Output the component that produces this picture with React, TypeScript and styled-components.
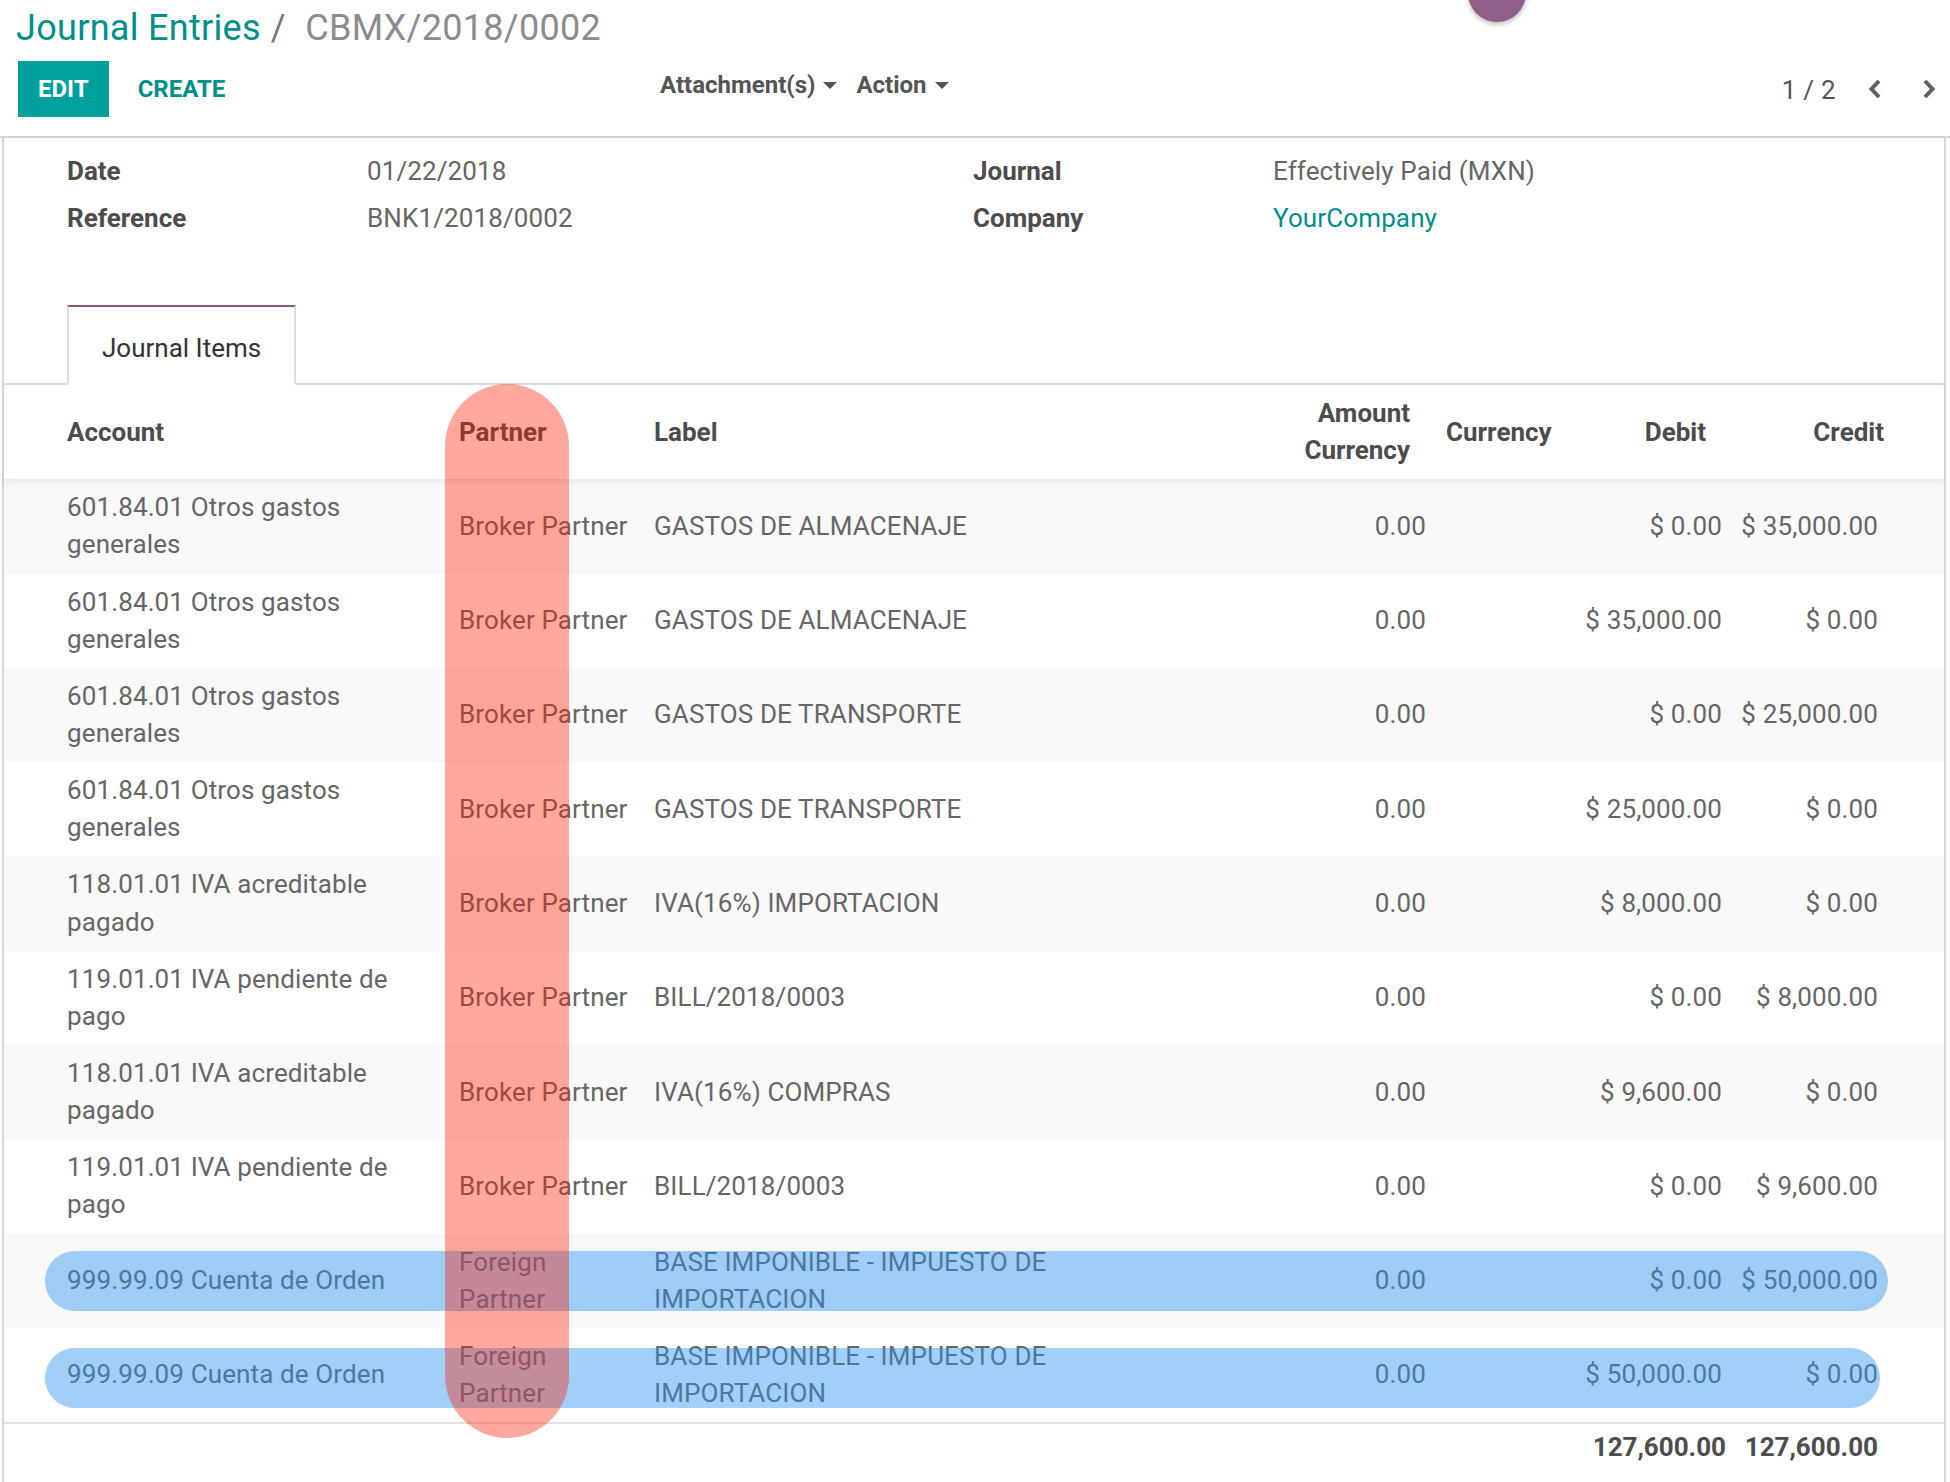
import React from 'react'
import styled, { createGlobalStyle } from 'styled-components'

const GlobalStyle = createGlobalStyle`
  html, body { margin: 0; padding: 0; background: #fff; }
  body {
    font-family: Roboto, 'Noto Sans', sans-serif;
    font-size: 26px;
    line-height: 1.42857;
    color: #666;
  }
  * { box-sizing: border-box; }
`

const TEAL = '#00A09D'
const LINK = '#00908c'

const Page = styled.div`
  position: relative;
  width: 1950px;
  height: 1482px;
  overflow: hidden;
`

const Bubble = styled.div`
  position: absolute;
  left: 1468px;
  top: -36px;
  width: 58px;
  height: 58px;
  border-radius: 50%;
  background: #8f5f87;
  box-shadow: 0 2px 5px rgba(0, 0, 0, 0.3);
  z-index: 5;
`

const ControlPanel = styled.div`
  padding: 8px 14px 19px 17px;
  border-bottom: 2px solid #d6d6d6;
`

const Breadcrumb = styled.div`
  display: flex;
  align-items: center;
  height: 40px;
  margin: 0 0 13px -1px;
  font-size: 36px;
  line-height: 40px;
  letter-spacing: 0.3px;
  white-space: nowrap;
`

const Crumb = styled.span`
  color: ${LINK};
`

const Separator = styled.span`
  color: #777;
  padding: 0 10px;
`

const Active = styled.span`
  color: #8c8c8c;
`

const ButtonRow = styled.div`
  display: grid;
  grid-template-columns: 643px 1fr auto;
  align-items: center;
  height: 56px;
`

const Buttons = styled.div`
  display: flex;
  gap: 9px;
  margin-left: 1px;
`

const Button = styled.button<{ $primary?: boolean }>`
  height: 56px;
  padding: 0 20px;
  border: none;
  border-radius: 0;
  background: ${(p) => (p.$primary ? TEAL : 'transparent')};
  color: ${(p) => (p.$primary ? '#fff' : LINK)};
  font-family: Roboto, sans-serif;
  font-size: 24px;
  font-weight: 700;
  text-transform: uppercase;
`

const Sidebar = styled.div`
  display: flex;
  gap: 19px;
  padding-bottom: 8px;
`

const Dropdown = styled.div`
  display: flex;
  align-items: center;
  font-size: 24px;
  font-weight: 700;
  color: #555;
`

const Caret = styled.span`
  display: inline-block;
  margin-left: 8px;
  width: 0;
  height: 0;
  border-left: 7px solid transparent;
  border-right: 7px solid transparent;
  border-top: 7px solid #555;
`

const Pager = styled.div`
  display: flex;
  align-items: center;
  color: #555;
`

const PagerValue = styled.span`
  font-size: 26px;
  letter-spacing: 0.3px;
  margin-right: 32px;
  padding-top: 4px;
`

const PagerButton = styled.span<{ $gap?: number }>`
  display: flex;
  margin-left: ${(p) => p.$gap ?? 0}px;
`

const Sheet = styled.div`
  margin: 0 4px 0 2px;
  height: 1344px;
  border-left: 2px solid #d6d6d6;
  border-right: 2px solid #d6d6d6;
  letter-spacing: 0.12px;
`

const FormGrid = styled.div`
  display: grid;
  grid-template-columns: 300px 606px 300px 1fr;
  grid-auto-rows: 47px;
  align-items: center;
  padding: 10px 0 0 63px;
`

const FieldLabel = styled.div`
  font-weight: 700;
  letter-spacing: 0;
  color: #4c4c4c;
`

const FieldValue = styled.div<{ $link?: boolean }>`
  color: ${(p) => (p.$link ? LINK : '#666')};
`

const TabBar = styled.div`
  display: flex;
  margin-top: 63px;
  padding-left: 63px;
  height: 80px;
  border-bottom: 2px solid #ddd;
`

const Tab = styled.div`
  height: 80px;
  padding: 8px 33px 0;
  display: flex;
  align-items: center;
  background: #fff;
  color: #333;
  letter-spacing: 0;
  border: 2px solid #ddd;
  border-top: 2px solid #875a7b;
  border-bottom: 2px solid #fff;
`

const TableWrap = styled.div`
  position: relative;
`

const COLUMNS = '443px 195px 572px 224px 132px 164px 156px 1fr'

const HeadRow = styled.div`
  position: relative;
  z-index: 1;
  display: grid;
  grid-template-columns: ${COLUMNS};
  background: #fff;
  box-shadow: 0 3px 6px rgba(0, 0, 0, 0.07);
`

const BodyRow = styled.div<{ $striped: boolean }>`
  position: relative;
  display: grid;
  grid-template-columns: ${COLUMNS};
  background: ${(p) => (p.$striped ? '#f9f9f9' : '#fff')};
`

const FootRow = styled.div`
  display: grid;
  grid-template-columns: ${COLUMNS};
  border-top: 2px solid #e2e2e2;
`

const Cell = styled.div<{ $right?: boolean; $pl?: number; $pr?: number; $pt?: number; $head?: boolean }>`
  align-self: center;
  padding: ${(p) => p.$pt ?? 10}px ${(p) => p.$pr ?? 12}px 10px ${(p) => p.$pl ?? 12}px;
  text-align: ${(p) => (p.$right ? 'right' : 'left')};
  white-space: ${(p) => (p.$right ? 'nowrap' : 'normal')};
  font-weight: ${(p) => (p.$head ? 700 : 400)};
  letter-spacing: ${(p) => (p.$head ? 0 : 0.12)}px;
  color: ${(p) => (p.$head ? '#4c4c4c' : '#666')};
`

const HeadAmount = styled(Cell)`
  white-space: normal;
`

const RowMark = styled.div<{ $top: number; $width: number }>`
  position: absolute;
  left: 41px;
  top: ${(p) => p.$top}px;
  width: ${(p) => p.$width}px;
  height: 60px;
  border-radius: 30px;
  background: rgba(40, 145, 240, 0.44);
  z-index: 2;
  pointer-events: none;
`

const ColumnMark = styled.div`
  position: absolute;
  left: 441px;
  top: -1px;
  width: 124px;
  height: 1054px;
  border-radius: 62px;
  background: rgba(255, 30, 0, 0.38);
  z-index: 3;
  pointer-events: none;
`

type Line = {
  account: string
  partner: string
  label: string
  debit: string
  credit: string
  mark?: { top: number; width: number }
}

const NB = '\u00a0'

const lines: Line[] = [
  { account: '601.84.01 Otros gastos generales', partner: 'Broker Partner', label: 'GASTOS DE ALMACENAJE', debit: `$${NB}0.00`, credit: `$${NB}35,000.00` },
  { account: '601.84.01 Otros gastos generales', partner: 'Broker Partner', label: 'GASTOS DE ALMACENAJE', debit: `$${NB}35,000.00`, credit: `$${NB}0.00` },
  { account: '601.84.01 Otros gastos generales', partner: 'Broker Partner', label: 'GASTOS DE TRANSPORTE', debit: `$${NB}0.00`, credit: `$${NB}25,000.00` },
  { account: '601.84.01 Otros gastos generales', partner: 'Broker Partner', label: 'GASTOS DE TRANSPORTE', debit: `$${NB}25,000.00`, credit: `$${NB}0.00` },
  { account: '118.01.01 IVA acreditable pagado', partner: 'Broker Partner', label: 'IVA(16%) IMPORTACION', debit: `$${NB}8,000.00`, credit: `$${NB}0.00` },
  { account: '119.01.01 IVA pendiente de pago', partner: 'Broker Partner', label: 'BILL/2018/0003', debit: `$${NB}0.00`, credit: `$${NB}8,000.00` },
  { account: '118.01.01 IVA acreditable pagado', partner: 'Broker Partner', label: 'IVA(16%) COMPRAS', debit: `$${NB}9,600.00`, credit: `$${NB}0.00` },
  { account: '119.01.01 IVA pendiente de pago', partner: 'Broker Partner', label: 'BILL/2018/0003', debit: `$${NB}0.00`, credit: `$${NB}9,600.00` },
  { account: '999.99.09 Cuenta de Orden', partner: 'Foreign Partner', label: 'BASE IMPONIBLE - IMPUESTO DE IMPORTACION', debit: `$${NB}0.00`, credit: `$${NB}50,000.00`, mark: { top: 17, width: 1843 } },
  { account: '999.99.09 Cuenta de Orden', partner: 'Foreign Partner', label: 'BASE IMPONIBLE - IMPUESTO DE IMPORTACION', debit: `$${NB}50,000.00`, credit: `$${NB}0.00`, mark: { top: 20, width: 1835 } },
]

const Chevron = ({ dir }: { dir: 'left' | 'right' }) => (
  <svg width="14" height="22" viewBox="0 0 14 22">
    <polyline
      points={dir === 'left' ? '11,3 3.5,11 11,19' : '3,3 10.5,11 3,19'}
      fill="none"
      stroke="#5f5f5f"
      strokeWidth="4"
      strokeLinecap="butt"
      strokeLinejoin="miter"
    />
  </svg>
)

const App = () => {
  return (
    <Page>
      <GlobalStyle />
      <Bubble />
      <ControlPanel>
        <Breadcrumb>
          <Crumb>Journal Entries</Crumb>
          <Separator>/{NB}</Separator>
          <Active>CBMX/2018/0002</Active>
        </Breadcrumb>
        <ButtonRow>
          <Buttons>
            <Button $primary>Edit</Button>
            <Button>Create</Button>
          </Buttons>
          <Sidebar>
            <Dropdown>
              Attachment(s)
              <Caret />
            </Dropdown>
            <Dropdown>
              Action
              <Caret />
            </Dropdown>
          </Sidebar>
          <Pager>
            <PagerValue>1 / 2</PagerValue>
            <PagerButton>
              <Chevron dir="left" />
            </PagerButton>
            <PagerButton $gap={40}>
              <Chevron dir="right" />
            </PagerButton>
          </Pager>
        </ButtonRow>
      </ControlPanel>

      <Sheet>
        <FormGrid>
          <FieldLabel>Date</FieldLabel>
          <FieldValue>01/22/2018</FieldValue>
          <FieldLabel>Journal</FieldLabel>
          <FieldValue>Effectively Paid (MXN)</FieldValue>
          <FieldLabel>Reference</FieldLabel>
          <FieldValue>BNK1/2018/0002</FieldValue>
          <FieldLabel>Company</FieldLabel>
          <FieldValue $link>YourCompany</FieldValue>
        </FormGrid>

        <TabBar>
          <Tab>Journal Items</Tab>
        </TabBar>

        <TableWrap>
          <HeadRow>
            <Cell $head $pl={63}>Account</Cell>
            <Cell $head>Partner</Cell>
            <Cell $head>Label</Cell>
            <HeadAmount $head $right $pr={28}>Amount Currency</HeadAmount>
            <Cell $head $pl={8}>Currency</Cell>
            <Cell $head $right $pr={28}>Debit</Cell>
            <Cell $head $right $pr={6}>Credit</Cell>
            <Cell />
          </HeadRow>

          {lines.map((line, i) => (
            <BodyRow key={i} $striped={i % 2 === 0}>
              <Cell $pl={63}>{line.account}</Cell>
              <Cell $pr={7}>{line.partner}</Cell>
              <Cell>{line.label}</Cell>
              <Cell $right>0.00</Cell>
              <Cell $pl={8} />
              <Cell $right>{line.debit}</Cell>
              <Cell $right $pl={4} $pr={12}>{line.credit}</Cell>
              <Cell />
              {line.mark && <RowMark $top={line.mark.top} $width={line.mark.width} />}
            </BodyRow>
          ))}

          <FootRow>
            <Cell />
            <Cell />
            <Cell />
            <Cell />
            <Cell />
            <Cell $head $right $pr={8} $pt={5}>127,600.00</Cell>
            <Cell $head $right $pl={4} $pt={5}>127,600.00</Cell>
            <Cell />
          </FootRow>

          <ColumnMark />
        </TableWrap>
      </Sheet>
    </Page>
  )
}

export default App
